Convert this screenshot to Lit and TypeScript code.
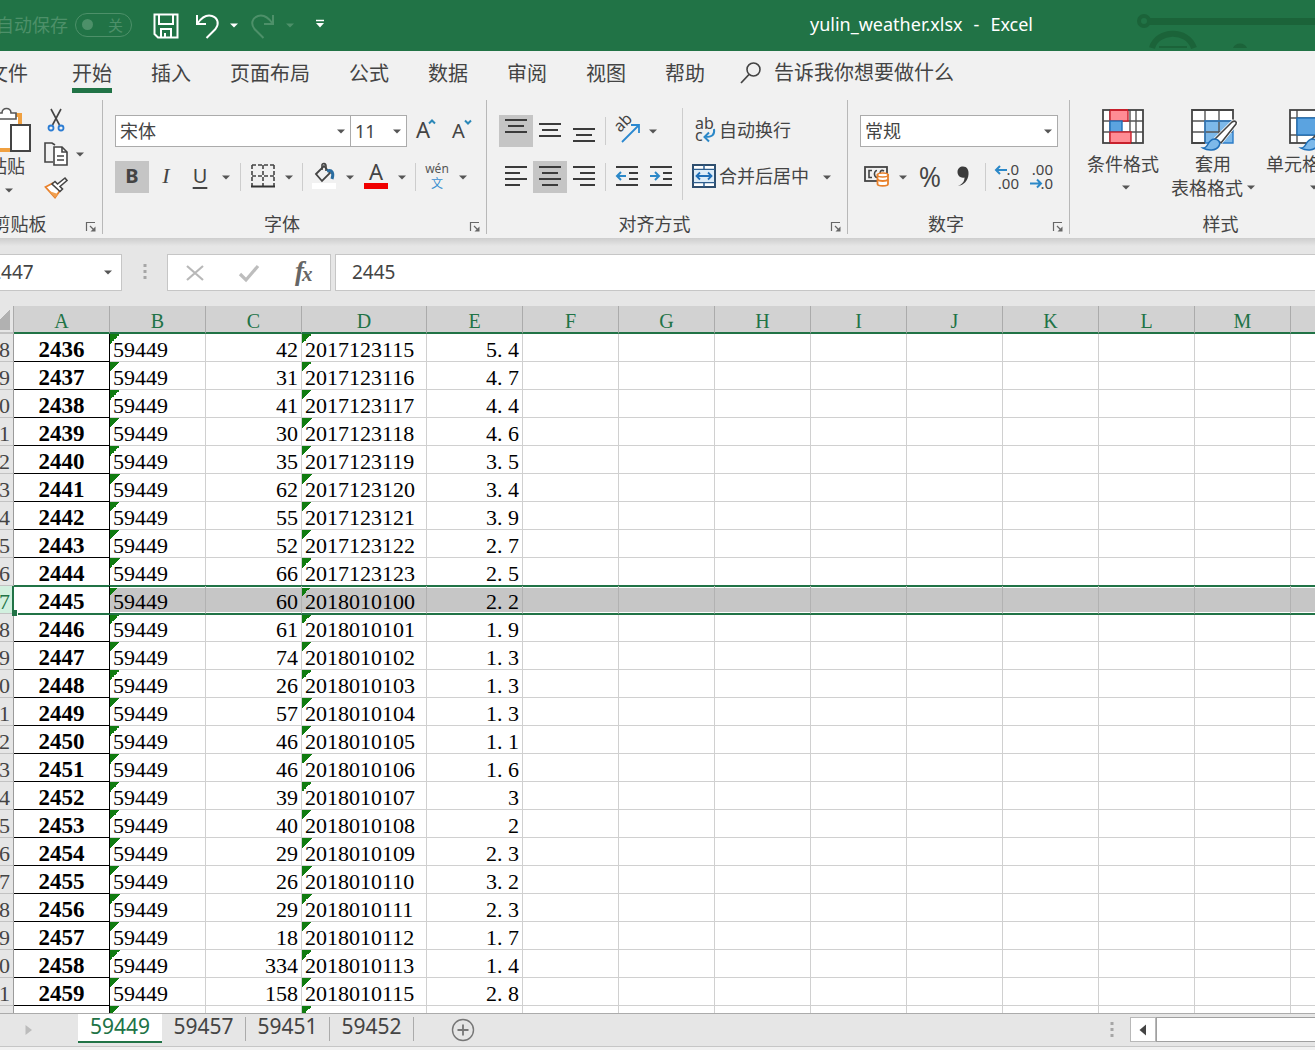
import { LitElement, html, svg, css, nothing } from "lit";
import { customElement, state } from "lit/decorators.js";
import { classMap } from "lit/directives/class-map.js";

const FIRST_ROW = 2438;
const SELECTED_ROW = 2447;
const COLUMNS = "ABCDEFGHIJKLMN".split("");
const EMPTY_COLUMNS = COLUMNS.slice(5);

// [index, count, hour stamp, value]
const DATA: [string, string, string, string][] = [
  ["2436", "42", "2017123115", "5.4"],
  ["2437", "31", "2017123116", "4.7"],
  ["2438", "41", "2017123117", "4.4"],
  ["2439", "30", "2017123118", "4.6"],
  ["2440", "35", "2017123119", "3.5"],
  ["2441", "62", "2017123120", "3.4"],
  ["2442", "55", "2017123121", "3.9"],
  ["2443", "52", "2017123122", "2.7"],
  ["2444", "66", "2017123123", "2.5"],
  ["2445", "60", "2018010100", "2.2"],
  ["2446", "61", "2018010101", "1.9"],
  ["2447", "74", "2018010102", "1.3"],
  ["2448", "26", "2018010103", "1.3"],
  ["2449", "57", "2018010104", "1.3"],
  ["2450", "46", "2018010105", "1.1"],
  ["2451", "46", "2018010106", "1.6"],
  ["2452", "39", "2018010107", "3"],
  ["2453", "40", "2018010108", "2"],
  ["2454", "29", "2018010109", "2.3"],
  ["2455", "26", "2018010110", "3.2"],
  ["2456", "29", "2018010111", "2.3"],
  ["2457", "18", "2018010112", "1.7"],
  ["2458", "334", "2018010113", "1.4"],
  ["2459", "158", "2018010115", "2.8"],
];

const caret = html`<svg class="caret" width="8" height="5" viewBox="0 0 8 5" aria-hidden="true">
  <path d="M0 0.5H8L4 4.5Z" fill="currentColor" />
</svg>`;

const icon = (w: number, h: number, body: unknown) =>
  html`<svg width=${w} height=${h} viewBox="0 0 ${w} ${h}" fill="none" aria-hidden="true">${body}</svg>`;

const lines = (rows: [number, number, number][], h = 22) =>
  icon(22, h, rows.map(([x1, x2, y]) => svg`<path d="M${x1} ${y}H${x2}" stroke="#3b3b3b" stroke-width="2"/>`));

const icons = {
  save: icon(26, 26, svg`<g stroke="#fff" stroke-width="2"><path d="M1.500 1.500H24.500V24.500H5L1.500 21Z"/><path d="M6 2V11H20V2M8 24V16H18V24M12 20V24"/></g>`),
  undo: icon(26, 26, svg`<path d="M2 2V11H11M2.500 10.500C7 4 12 1.500 17 3C23 5 24.500 11 20.500 16L11.500 25" stroke="#fff" stroke-width="2"/>`),
  redo: icon(26, 26, svg`<path d="M24 2V11H15M23.500 10.500C19 4 14 1.500 9 3C3 5 1.500 11 5.500 16L14.500 25" stroke="#4d9069" stroke-width="2"/>`),
  more: icon(10, 10, svg`<path d="M1 1.500H9" stroke="#fff" stroke-width="1.500"/><path d="M1 4H9L5 8.500Z" fill="#fff"/>`),
  search: icon(24, 24, svg`<circle cx="14.500" cy="8.500" r="6.500" stroke="#444" stroke-width="1.600"/><path d="M10 13.500L2 22" stroke="#444" stroke-width="1.800"/>`),
  paste: icon(48, 47, svg`<rect x="9" y="8" width="28" height="35" fill="#fff" stroke="#f0a040" stroke-width="4"/><path d="M14 12V6H19C19 0 28 0 28 6H33V12Z" fill="#fff" stroke="#555" stroke-width="1.600"/><rect x="28" y="18" width="19" height="26" fill="#fff" stroke="#444" stroke-width="2"/>`),
  cut: icon(18, 24, svg`<path d="M4 1L12.500 17M14 1L5.500 17" stroke="#444" stroke-width="1.600"/><circle cx="4" cy="20" r="2.500" stroke="#2b7cd3" stroke-width="1.800"/><circle cx="14" cy="20" r="2.500" stroke="#2b7cd3" stroke-width="1.800"/>`),
  copy: icon(24, 24, svg`<g stroke="#444" stroke-width="1.600"><path d="M9 20H1V1H8L11 3"/><path d="M10 5H18L23 10V23H10Z" fill="#fff"/><path d="M18 5V10H23M13 14H20M13 18H20"/></g>`),
  brush: icon(24, 22, svg`<path d="M1.500 10L9 6L16 13.500L11 20.500Z" fill="#fff" stroke="#e8812c" stroke-width="1.800"/><path d="M5 14L14 17L11 20.500Z" fill="#f0a050"/><path d="M8 7L11 4.500L13.500 7L21 1L23 3.500L16 9.500L18.500 12L16 14.500Z" fill="#fff" stroke="#444" stroke-width="1.600"/>`),
  grow: icon(20, 26, svg`<text x="0" y="20" font-size="22" fill="#444">A</text><path d="M13 5.500L16 2.500L19 5.500" stroke="#2b88b8" stroke-width="2"/>`),
  shrink: icon(20, 26, svg`<text x="0" y="20" font-size="20" fill="#444">A</text><path d="M13 2.500L16 5.500L19 2.500" stroke="#2b88b8" stroke-width="2"/>`),
  borders: icon(24, 24, svg`<path d="M1 1H23M1 12H23M1 1V22M12 1V22M23 1V22" stroke="#444" stroke-width="1.600" stroke-dasharray="4 2"/><path d="M0 22.500H24" stroke="#333" stroke-width="2"/>`),
  fill: icon(24, 26, svg`<path d="M0 20H24V26H0Z" fill="#fff"/><path d="M4 11L12 3L18 10L10 18Z" stroke="#444" stroke-width="1.800"/><path d="M10 7V2C10 0 14 0 14 3V8" stroke="#444" stroke-width="1.600"/><path d="M15 8C20 6 22 10 20 16" stroke="#2b6da0" stroke-width="3"/>`),
  color: icon(24, 26, svg`<text x="12" y="17" font-size="22" text-anchor="middle" fill="#444">A</text><path d="M0 20H24V26H0Z" fill="#f00000"/>`),
  phonetic: icon(26, 28, svg`<text x="13" y="11" font-size="12" text-anchor="middle" fill="#555">wén</text><text x="13" y="26" font-size="12" text-anchor="middle" fill="#3b8fd0">文</text>`),
  top: lines([[0, 22, 2], [3, 19, 8], [0, 22, 14]], 26),
  middle: lines([[0, 22, 6], [3, 19, 12], [0, 22, 18]], 26),
  bottom: lines([[0, 22, 11], [3, 19, 17], [0, 22, 23]], 26),
  left: lines([[0, 22, 2], [0, 15, 8], [0, 22, 14], [0, 15, 20]]),
  center: lines([[0, 22, 2], [3, 19, 8], [0, 22, 14], [3, 19, 20]]),
  right: lines([[0, 22, 2], [7, 22, 8], [0, 22, 14], [7, 22, 20]]),
  orient: icon(28, 26, svg`<text font-size="16" fill="#444" transform="translate(7 15) rotate(-45)">ab</text><path d="M9 24L25 8M18 7H26V15" stroke="#2b88d0" stroke-width="1.800"/>`),
  outdent: icon(22, 22, svg`<path d="M0 2H22M13 8H22M13 14H22M0 20H22" stroke="#3b3b3b" stroke-width="2"/><path d="M10 11H1M5 7L1 11L5 15" stroke="#2b88c8" stroke-width="2"/>`),
  indent: icon(22, 22, svg`<path d="M0 2H22M13 8H22M13 14H22M0 20H22" stroke="#3b3b3b" stroke-width="2"/><path d="M0 11H9M5 7L9 11L5 15" stroke="#2b88c8" stroke-width="2"/>`),
  wrap: icon(24, 26, svg`<text x="3" y="12" font-size="16" fill="#444">ab</text><text x="3" y="24" font-size="16" fill="#444">c</text><path d="M22 12C23 18 20 20 13 20M17 15.500L12.500 20L17 24.500" stroke="#2b88c8" stroke-width="2"/>`),
  merge: icon(24, 24, svg`<rect x="1" y="1" width="22" height="22" fill="#fff" stroke="#2f4f6f" stroke-width="2"/><path d="M1 5.500H23M1 18.500H23M12 1V5M12 19V23" stroke="#2f5f8f" stroke-width="1.500"/><rect x="2" y="6" width="20" height="12" fill="#dcecf8"/><path d="M4 12H20M8 8.500L4.500 12L8 15.500M16 8.500L19.500 12L16 15.500" stroke="#1f6fb8" stroke-width="1.800"/>`),
  currency: icon(26, 22, svg`<rect x="1" y="2" width="22" height="14" stroke="#444" stroke-width="1.800"/><path d="M8 5.500H5V12.500H8M14 12C10 14 9 6 13 5.500M20 6C17 4 15.500 7 16.500 9" stroke="#444" stroke-width="1.600"/><path d="M13.500 10V19C13.500 21.500 24 21.500 24 19V10Z" fill="#fff" stroke="#e8812c" stroke-width="1.800"/><ellipse cx="18.750" cy="10" rx="5.250" ry="2" fill="#fff" stroke="#e8812c" stroke-width="1.600"/><path d="M13.500 14.500C15 16.500 22.500 16.500 24 14.500" stroke="#e8812c" stroke-width="1.800"/>`),
  percent: icon(24, 26, svg`<text class="light" x="13" y="24" font-size="27" text-anchor="middle" fill="#444">%</text>`),
  comma: icon(14, 22, svg`<path d="M2 21C7 19 8.500 16 8.500 12.500C5 13.500 1.500 11 1.500 7C1.500 3.500 4 1.500 7 1.500C11 1.500 13 5 12.500 9.500C12 15.500 8 20 2 21Z" fill="#3b3b3b"/>`),
  decInc: icon(26, 26, svg`<text x="24" y="12" font-size="15" text-anchor="end" fill="#444">.0</text><text x="24" y="26" font-size="15" text-anchor="end" fill="#444">.00</text><path d="M12 7H1M5 3L1 7L5 11" stroke="#2b88c8" stroke-width="2"/>`),
  decDec: icon(26, 26, svg`<text x="24" y="12" font-size="15" text-anchor="end" fill="#444">.00</text><text x="24" y="26" font-size="15" text-anchor="end" fill="#444">.0</text><path d="M1 20.500H12M8 16.500L12 20.500L8 24.500" stroke="#2b88c8" stroke-width="2"/>`),
  conditional: icon(42, 36, svg`<rect x="1" y="1" width="40" height="33" fill="#fff"/><path d="M1 12H41M1 23H41M8 1V34M28 1V34M34 1V34" stroke="#555" stroke-width="1.400"/><rect x="8" y="1" width="18" height="11" fill="#ff8c94" stroke="#c8202c" stroke-width="1.400"/><rect x="8" y="12" width="12" height="11" fill="#5ba3e0" stroke="#1f6fb8" stroke-width="1.400"/><rect x="8" y="23" width="21" height="11" fill="#ff8c94" stroke="#c8202c" stroke-width="1.400"/><rect x="1" y="1" width="40" height="33" stroke="#444" stroke-width="1.800"/><path d="M8 1H26M8 34H29" stroke="#c8202c" stroke-width="1.800"/>`),
  tableFormat: icon(48, 42, svg`<rect x="3" y="1" width="41" height="33" fill="#fff"/><rect x="16" y="12" width="28" height="22" fill="#7db9ea"/><path d="M3 12H44M3 23H44M16 1V34M30 1V34" stroke="#555" stroke-width="1.400"/><path d="M16 12H44V34H16Z" stroke="#2b7cc8" stroke-width="1.400"/><path d="M16 34H3V1H44V12" stroke="#444" stroke-width="1.800"/><path d="M25 31L44 12L48 14L31 35Z" fill="#fff" stroke="#fff" stroke-width="3"/><path d="M26 30L43 13C46 11 48 13 47 15L32 34Z" fill="#fff" stroke="#444" stroke-width="1.600"/><path d="M14 39C20 39 18 31 25 30C30 30 32 34 30 37C27 42 19 42 14 39Z" fill="#7db9ea" stroke="#1f6fb8" stroke-width="1.500"/>`),
  cellStyles: icon(48, 42, svg`<rect x="3" y="1" width="41" height="33" fill="#fff"/><path d="M3 9H44M3 26H44M10 1V34M36 1V34" stroke="#555" stroke-width="1.400"/><rect x="10" y="9" width="26" height="17" fill="#5ba3e0" stroke="#1f6fb8" stroke-width="1.400"/><rect x="3" y="1" width="41" height="33" stroke="#444" stroke-width="1.800"/><path d="M25 30L42 13L46 15L31 34Z" fill="#fff" stroke="#444" stroke-width="1.600"/><path d="M14 39C20 39 18 31 25 30C30 30 32 34 30 37C27 42 19 42 14 39Z" fill="#7db9ea" stroke="#1f6fb8" stroke-width="1.500"/>`),
  launcher: icon(10, 10, svg`<path d="M0.500 9V0.500H9M4 4L8 8" stroke="#666" stroke-width="1.200"/><path d="M9.500 4.500V9.500H4.500Z" fill="#666"/>`),
  grip: icon(4, 18, svg`<g fill="#a6a6a6"><rect y="1" x="0.500" width="3" height="3"/><rect y="7" x="0.500" width="3" height="3"/><rect y="13" x="0.500" width="3" height="3"/></g>`),
  cancel: icon(18, 18, svg`<path d="M1 2L17 16M17 2L1 16" stroke="#b8b8b8" stroke-width="2.200"/>`),
  accept: icon(20, 18, svg`<path d="M1 10L7 16L19 2" stroke="#bdbdbd" stroke-width="3.200"/>`),
  fx: icon(24, 26, svg`<g fill="#666"><text class="fx" x="4" y="20" font-size="27">f</text><text class="fx" x="11" y="21" font-size="21">x</text></g>`),
  next: icon(8, 12, svg`<path d="M0.500 1V11L7 6Z" fill="#bcbcbc"/>`),
  previous: icon(8, 12, svg`<path d="M7 0.500V11.500L0.500 6Z" fill="#444"/>`),
  add: icon(24, 24, svg`<circle cx="12" cy="12" r="10.500" stroke="#777" stroke-width="1.400"/><path d="M6.500 12H17.500M12 6.500V17.500" stroke="#777" stroke-width="1.800"/>`),
  circuit: icon(180, 51, svg`<g stroke="#1b6339"><circle cx="9" cy="21" r="5" stroke-width="4"/><path d="M15 21.500H180" stroke-width="7"/><path d="M17 48C22 30 52 28 59 48" stroke-width="6"/><path d="M24 47H52" stroke-width="2"/></g><path d="M98 48C100 42 110 42 112 48Z" fill="#1b6339"/>`),
};

@customElement("app-root")
export class AppRoot extends LitElement {
  @state() private sheet = "59449";

  static styles = css`
    :host {
      display: block;
      height: 100vh;
      overflow: hidden;
      color: #444;
      font-family: "Noto Sans", "Noto Sans CJK SC", sans-serif;
      font-size: 18px;
    }
    * { box-sizing: border-box; }
    svg { display: block; flex: none; overflow: visible; }
    svg text { font-family: "Noto Sans", "Noto Sans CJK SC", sans-serif; }
    svg .fx { font-family: "Liberation Serif", serif; font-style: italic; font-weight: 700; }
    svg .light { font-family: "Open Sans", sans-serif; font-weight: 400; }
    button, input, select {
      font: inherit;
      color: inherit;
      background: none;
      border: 0;
      border-radius: 0;
      margin: 0;
      padding: 0;
    }
    button {
      display: flex;
      align-items: center;
      justify-content: center;
      flex: none;
      white-space: nowrap;
    }
    .caret { color: #555; }
    /* The window hangs over the left edge of the screen. */
    .window {
      display: flex;
      flex-direction: column;
      height: 100%;
      margin-left: -38px;
      background: #e6e6e6;
    }

    .titlebar {
      display: flex;
      align-items: center;
      flex: none;
      height: 51px;
      padding-left: 34px;
      background: #217346;
      color: #fff;
      overflow: hidden;
    }
    .titlebar .caret { color: #fff; }
    .autosave {
      display: flex;
      align-items: center;
      gap: 7px;
      color: #4d9069;
      line-height: 24px;
      white-space: nowrap;
      margin-right: 13px;
      padding-bottom: 2px;
    }
    .toggle {
      justify-content: space-between;
      width: 57px;
      height: 24px;
      padding: 0 8px 0 6px;
      border: 1px solid #4d9069;
      border-radius: 12px;
      font-size: 15px;
    }
    .knob { width: 11px; height: 11px; border-radius: 50%; background: #4d9069; }
    .quick { width: 42px; height: 32px; }
    .quick.redo { width: 46px; }
    .drop { width: 18px; height: 32px; }
    .titlebar .drop { width: 10px; }
    .titlebar .faded .caret { color: #4d9069; }
    .customize { width: 50px; height: 32px; padding-bottom: 3px; }
    .title {
      display: flex;
      flex: none;
      gap: 11px;
      margin-left: 465px;
      padding-bottom: 4px;
    }
    .circuit { margin-left: auto; }

    .tabs {
      display: flex;
      flex: none;
      height: 45px;
      padding-left: 6px;
      background: #f1f1f1;
      font-size: 20px;
    }
    .tab {
      align-items: flex-start;
      height: 42px;
      margin: 0 39px 0 0;
      padding-top: 8px;
      line-height: 30px;
      border-bottom: 5px solid transparent;
    }
    .tab.file { margin: 0 44px 0 20px; }
    .tab.active { border-color: #217346; }
    .tell { gap: 11px; height: 44px; margin-left: -5px; line-height: 30px; }

    .ribbon {
      display: flex;
      flex: none;
      height: 142px;
      padding-top: 4px;
      background: #f1f1f1;
      overflow: hidden;
    }
    .group {
      display: flex;
      flex-direction: column;
      justify-content: space-between;
      flex: none;
      height: 134px;
      border-right: 1px solid #b8b8b8;
    }
    .clipboard { width: 141px; }
    .font { width: 384px; }
    .align { width: 361px; }
    .number { width: 222px; }
    .styles { width: 302px; }
    .caption { display: flex; align-items: center; height: 20px; line-height: 20px; }
    .caption span { flex: 1; text-align: center; }
    .caption button { width: 25px; height: 20px; padding: 5px 0 0 2px; }
    .rows {
      display: flex;
      flex-direction: column;
      gap: 14px;
      padding: 15px 0 0 12px;
    }
    .row { display: flex; align-items: center; height: 32px; }
    .tool { width: 34px; height: 32px; line-height: 24px; }
    .tool.on { background: #c5c5c5; }
    .commands .tool, .commands .label { padding-bottom: 2px; }
    .w38 { width: 38px; }
    .bold { font-weight: 700; font-size: 20px; }
    .italic { font-family: "Liberation Serif", serif; font-style: italic; font-size: 22px; }
    .under { text-decoration: underline; text-underline-offset: 4px; font-size: 20px; }
    .line { flex: none; width: 1px; height: 28px; margin: 0 5px; background: #cdcdcd; }
    .line.tight { margin: 0 4px; }
    .line.tall { height: 92px; margin-top: 8px; }
    .split { display: flex; }
    .split .rows.second { padding-left: 5px; }
    .label { gap: 3px; height: 32px; padding-bottom: 2px; line-height: 24px; }
    .label + .drop { margin-left: 9px; }
    .combo { display: grid; align-items: center; flex: none; height: 32px; }
    .combo select, .combo .caret { grid-area: 1 / 1; }
    .combo select {
      appearance: none;
      height: 32px;
      padding-left: 4px;
      background: #fff;
      border: 1px solid #ababab;
    }
    .combo .caret { justify-self: end; margin-right: 6px; pointer-events: none; }
    .family { width: 236px; }
    .size { width: 57px; margin-left: -1px; }
    .format { width: 198px; }

    .paste-area { display: flex; }
    .paste {
      flex-direction: column;
      justify-content: flex-start;
      width: 62px;
      margin: 7px 3px 0 14px;
      line-height: 24px;
    }
    .paste .caret { margin: 10px 0 0 4px; }
    .clips { display: flex; flex-direction: column; padding-top: 3px; }
    .clips .row { height: 34px; }
    .clips .tool { height: 34px; width: 30px; }
    .gallery { display: flex; padding: 9px 0 0 4px; }
    .big {
      flex-direction: column;
      justify-content: flex-start;
      width: 98px;
      line-height: 24px;
    }
    .big .art { display: block; height: 43px; }
    .big .second { display: flex; align-items: center; gap: 4px; height: 23px; padding-left: 6px; }
    .big.mid { width: 82px; }
    .big.mid .second { padding-left: 0; }
    .big.last { width: 114px; }

    .formula {
      display: flex;
      flex: none;
      height: 68px;
      padding-top: 16px;
      background: linear-gradient(#cdcdcd, #e6e6e6 8px);
      font-size: 19px;
    }
    .box { display: flex; align-items: center; height: 37px; background: #fff; border: 1px solid #c6c6c6; }
    .name { width: 160px; }
    .name input { width: 130px; padding-left: 15px; }
    .name .drop { height: 35px; width: 30px; }
    .grip { display: flex; align-items: center; justify-content: center; width: 45px; height: 35px; }
    .actions { width: 164px; }
    .actions button { flex: 1; height: 35px; }
    .box input { height: 35px; padding-bottom: 1px; }
    .entry { flex: 1; min-width: 0; margin-left: 4px; border-right: 0; }
    .entry input { flex: 1; min-width: 0; padding-left: 16px; }

    .grid { flex: 1; min-height: 0; overflow: hidden; background: #fff; }
    table {
      width: 1425px;
      table-layout: fixed;
      border-collapse: separate;
      border-spacing: 0;
      font-family: "Liberation Serif", serif;
      font-size: 22px;
      line-height: 24px;
      color: #000;
    }
    .c-head { width: 52px; }
    .c-cell { width: 96px; }
    .c-wide { width: 125px; }
    th, td { height: 28px; padding: 3px 3px 0; white-space: nowrap; font-weight: 400; }
    thead th {
      padding-top: 4px;
      line-height: 22px;
      background: #d2d2d2;
      color: #217346;
      border-right: 1px solid #ababab;
      border-bottom: 2px solid #217346;
      font-size: 20px;
    }
    thead th.corner {
      border-bottom-color: #c2c2c2;
      background: linear-gradient(135deg, #e6e6e6 50%, #b1b1b1 50%) right 3px bottom 2px / 20px 20px no-repeat #e6e6e6;
    }
    td {
      border-right: 1px solid #d0d0d0;
      border-bottom: 1px solid #d0d0d0;
      text-align: right;
    }
    tbody td, .rownum { padding-top: 4px; line-height: 23px; }
    .rownum {
      padding-left: 3px;
      padding-right: 2px;
      background: #e6e6e6;
      color: #444;
      border-right: 1px solid #9b9b9b;
      border-bottom: 1px solid #c2c2c2;
      text-align: center;
    }
    .index {
      font-size: 23px;
      font-weight: 700;
      text-align: center;
      border-color: #000;
    }
    .text {
      text-align: left;
      background: linear-gradient(135deg, #107c10 50%, transparent 50%) 0 0 / 10px 10px no-repeat;
    }
    .dot { display: inline-block; width: 11px; text-align: left; }
    .selected td {
      position: relative;
      z-index: 1;
      background-color: #c6c6c6;
      border-right-color: #b2b2b2;
      border-bottom-color: #217346;
      box-shadow: inset 0 1px #217346, inset 0 2px #fff, inset 0 -1px #fff, 0 -1px #217346, 0 1px #217346;
    }
    .selected .index { background-color: #fff; border-right-color: #000; }
    .selected .rownum {
      position: relative;
      padding-right: 1px;
      background: #d2f0df;
      color: #217346;
      border-right: 2px solid #217346;
    }
    .handle {
      position: absolute;
      left: -2px;
      bottom: -3px;
      width: 6px;
      height: 6px;
      background: #217346;
      border: solid #fff;
      border-width: 0 1px 0 0;
    }

    .sheets {
      display: flex;
      flex: none;
      height: 34px;
      border-top: 1px solid #ababab;
      border-bottom: 1px solid #c6c6c6;
      font-size: 21px;
    }
    .nav { width: 116px; padding-left: 18px; }
    .sheet { width: 84px; height: 29px; padding-bottom: 4px; line-height: 24px; }
    .sheet:not(.active) { height: 24px; margin-top: 3px; padding-bottom: 6px; border-right: 1px solid #ababab; }
    .sheet.active { background: #fff; color: #217346; border-bottom: 2px solid #217346; }
    .add { width: 98px; }
    .scroll { display: flex; width: 210px; margin-left: auto; padding-top: 3px; }
    .scroll .grip { width: 25px; height: 25px; padding-right: 12px; }
    .back { width: 26px; height: 25px; background: #fff; border: 1px solid #b8b8b8; }
    .track { flex: 1; height: 25px; background: #fff; border: 1px solid #a0a0a0; border-width: 1px 0 1px 1px; }
    .status { flex: none; height: 3px; background: #f1f1f1; }
  `;

  private tool(label: string, body: unknown, extra = "") {
    return html`<button class="tool ${extra}" aria-label=${label}>${body}</button>`;
  }

  private drop(label: string) {
    return html`<button class="drop" aria-label=${label}>${caret}</button>`;
  }

  private caption(text: string, launcher = true) {
    return html`<div class="caption"><span>${text}</span>${launcher
      ? html`<button aria-label=${text}>${icons.launcher}</button>`
      : nothing}</div>`;
  }

  private value(text: string) {
    const [whole, part] = text.split(".");
    return part ? html`${whole}<span class="dot">.</span>${part}` : whole;
  }

  private renderTitle() {
    return html`<header class="titlebar">
      <div class="autosave"><span>自动保存</span>
        <button class="toggle" role="switch" aria-checked="false" aria-label="自动保存"><span class="knob"></span><span>关</span></button>
      </div>
      <button class="quick" aria-label="保存">${icons.save}</button>
      <button class="quick" aria-label="撤消">${icons.undo}</button>
      <span>${this.drop("撤消列表")}</span>
      <button class="quick redo" aria-label="恢复">${icons.redo}</button>
      <span class="faded">${this.drop("恢复列表")}</span>
      <button class="customize" aria-label="自定义">${icons.more}</button>
      <div class="title"><span>yulin_weather.xlsx</span><span>-</span><span>Excel</span></div>
      <div class="circuit">${icons.circuit}</div>
    </header>`;
  }

  private renderTabs() {
    const tabs = ["文件", "开始", "插入", "页面布局", "公式", "数据", "审阅", "视图", "帮助"];
    return html`<nav class="tabs">
      ${tabs.map((t) => html`<button class=${classMap({ tab: true, file: t === "文件", active: t === "开始" })}>${t}</button>`)}
      <button class="tell">${icons.search}<span>告诉我你想要做什么</span></button>
    </nav>`;
  }

  private renderRibbon() {
    return html`<div class="ribbon">
      <section class="group clipboard">
        <div class="paste-area">
          <button class="paste">${icons.paste}<span>粘贴</span>${caret}</button>
          <div class="clips">
            <div class="row">${this.tool("剪切", icons.cut)}</div>
            <div class="row">${this.tool("复制", icons.copy)}${this.drop("复制选项")}</div>
            <div class="row">${this.tool("格式刷", icons.brush)}</div>
          </div>
        </div>
        ${this.caption("剪贴板")}
      </section>

      <section class="group font">
        <div class="rows">
          <div class="row">
            <label class="combo"><select class="family" aria-label="字体"><option>宋体</option></select>${caret}</label>
            <label class="combo"><select class="size" aria-label="字号"><option>11</option></select>${caret}</label>
            ${this.tool("增大字号", icons.grow, "w38")}${this.tool("减小字号", icons.shrink)}
          </div>
          <div class="row commands">
            ${this.tool("加粗", "B", "on bold")}${this.tool("倾斜", "I", "italic")}${this.tool("下划线", "U", "under")}${this.drop("下划线选项")}
            <i class="line"></i>
            ${this.tool("边框", icons.borders)}${this.drop("边框选项")}
            <i class="line tight"></i>
            ${this.tool("填充颜色", icons.fill)}${this.drop("填充选项")}
            ${this.tool("字体颜色", icons.color)}${this.drop("颜色选项")}
            <i class="line tight"></i>
            ${this.tool("拼音", icons.phonetic)}${this.drop("拼音选项")}
          </div>
        </div>
        ${this.caption("字体")}
      </section>

      <section class="group align">
        <div class="split">
          <div class="rows">
            <div class="row">
              ${this.tool("顶端对齐", icons.top, "on")}${this.tool("垂直居中", icons.middle)}${this.tool("底端对齐", icons.bottom)}
              <i class="line tight"></i>
              ${this.tool("方向", icons.orient)}${this.drop("方向选项")}
            </div>
            <div class="row commands">
              ${this.tool("左对齐", icons.left)}${this.tool("居中", icons.center, "on")}${this.tool("右对齐", icons.right)}
              <i class="line tight"></i>
              ${this.tool("减少缩进量", icons.outdent)}${this.tool("增加缩进量", icons.indent)}
            </div>
          </div>
          <i class="line tight tall"></i>
          <div class="rows second">
            <div class="row"><button class="label">${icons.wrap}<span>自动换行</span></button></div>
            <div class="row commands"><button class="label">${icons.merge}<span>合并后居中</span></button>${this.drop("合并选项")}</div>
          </div>
        </div>
        ${this.caption("对齐方式")}
      </section>

      <section class="group number">
        <div class="rows">
          <div class="row">
            <label class="combo"><select class="format" aria-label="数字格式"><option>常规</option></select>${caret}</label>
          </div>
          <div class="row commands">
            ${this.tool("会计数字格式", icons.currency)}${this.drop("货币选项")}
            ${this.tool("百分比样式", icons.percent)}${this.tool("千位分隔样式", icons.comma)}
            <i class="line"></i>
            ${this.tool("增加小数位数", icons.decInc)}${this.tool("减少小数位数", icons.decDec)}
          </div>
        </div>
        ${this.caption("数字")}
      </section>

      <section class="group styles">
        <div class="gallery">
          <button class="big"><span class="art">${icons.conditional}</span><span>条件格式</span><span class="second">${caret}</span></button>
          <button class="big mid"><span class="art">${icons.tableFormat}</span><span>套用</span><span class="second">表格格式 ${caret}</span></button>
          <button class="big last"><span class="art">${icons.cellStyles}</span><span>单元格样式</span><span class="second">${caret}</span></button>
        </div>
        ${this.caption("样式", false)}
      </section>
    </div>`;
  }

  private renderFormula() {
    return html`<div class="formula">
      <div class="box name"><input aria-label="名称框" .value=${"A" + SELECTED_ROW} />${this.drop("名称列表")}</div>
      <div class="grip">${icons.grip}</div>
      <div class="box actions">
        <button aria-label="取消">${icons.cancel}</button>
        <button aria-label="输入">${icons.accept}</button>
        <button aria-label="插入函数">${icons.fx}</button>
      </div>
      <div class="box entry"><input aria-label="编辑栏" .value=${"2445"} /></div>
    </div>`;
  }

  private renderGrid() {
    return html`<main class="grid"><table>
      <colgroup>
        <col class="c-head" />
        ${COLUMNS.map((c) => html`<col class=${c === "D" ? "c-wide" : "c-cell"} />`)}
      </colgroup>
      <thead><tr><th class="corner"></th>${COLUMNS.map((c) => html`<th scope="col">${c}</th>`)}</tr></thead>
      <tbody>
        ${DATA.map(([index, count, stamp, value], i) => {
          const row = FIRST_ROW + i;
          const selected = row === SELECTED_ROW;
          return html`<tr class=${classMap({ selected })}>
            <th class="rownum" scope="row">${row}</th>
            <td class="index">${index}${selected ? html`<span class="handle"></span>` : nothing}</td>
            <td class="text">59449</td>
            <td>${count}</td>
            <td class="text">${stamp}</td>
            <td>${this.value(value)}</td>
            ${EMPTY_COLUMNS.map(() => html`<td></td>`)}
          </tr>`;
        })}
        <tr>
          <th class="rownum"></th><td class="index"></td><td class="text"></td><td></td><td class="text"></td><td></td>
          ${EMPTY_COLUMNS.map(() => html`<td></td>`)}
        </tr>
      </tbody>
    </table></main>`;
  }

  private renderSheets() {
    return html`<footer class="sheets">
      <button class="nav" aria-label="下一个工作表">${icons.next}</button>
      ${["59449", "59457", "59451", "59452"].map(
        (s) => html`<button class=${classMap({ sheet: true, active: s === this.sheet })} @click=${() => (this.sheet = s)}>${s}</button>`
      )}
      <button class="add" aria-label="新工作表">${icons.add}</button>
      <div class="scroll">
        <div class="grip">${icons.grip}</div>
        <button class="back" aria-label="向左滚动">${icons.previous}</button>
        <div class="track"></div>
      </div>
    </footer>
    <div class="status"></div>`;
  }

  render() {
    return html`<div class="window">
      ${this.renderTitle()}${this.renderTabs()}${this.renderRibbon()}${this.renderFormula()}${this.renderGrid()}${this.renderSheets()}
    </div>`;
  }
}
